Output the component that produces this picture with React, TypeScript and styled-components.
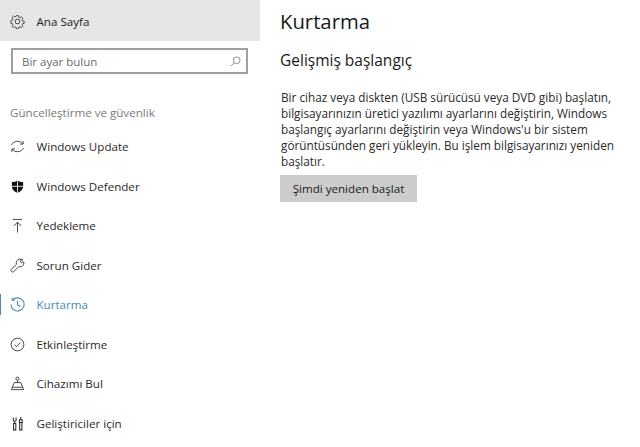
import styled, { createGlobalStyle } from 'styled-components';
import { ReactNode } from 'react';

const GlobalStyle = createGlobalStyle`
  html, body {
    margin: 0;
    padding: 0;
    background: #fff;
  }
  body {
    font-family: 'Open Sans', 'Noto Sans', sans-serif;
  }
`;

const icon = { fill: 'none', stroke: 'currentColor', strokeWidth: 0.9 };

const items: { label: string; active?: boolean; glyph: ReactNode }[] = [
  {
    label: 'Windows Update',
    glyph: (
      <svg width="15" height="15" viewBox="0 0 16 16" {...icon}>
        <path d="M1.500 6.500C2.500 4 5 2.500 8 2.500c2.300 0 4.300 .9 5.500 2.500" />
        <path d="M14 2.200v3.200h-3.200" />
        <path d="M14.500 9.500C13.500 12 11 13.500 8 13.500c-2.300 0-4.300-.9-5.500-2.500" />
        <path d="M2 13.800v-3.200h3.200" />
      </svg>
    ),
  },
  {
    label: 'Windows Defender',
    glyph: (
      <svg width="15" height="15" viewBox="0 0 16 16">
        <path fill="#111" d="M8 1.500c1.800 1.300 3.600 1.800 6 1.800v4.700c0 3.200-2.300 5.300-6 6.600-3.700-1.300-6-3.400-6-6.600V3.300c2.400 0 4.200-.5 6-1.800z" />
        <path stroke="#fff" strokeWidth="0.9" fill="none" d="M8 1.500v13M2 7.800h12" />
      </svg>
    ),
  },
  {
    label: 'Yedekleme',
    glyph: (
      <svg width="15" height="15" viewBox="0 0 16 16" {...icon}>
        <path d="M3 1.500h10" />
        <path d="M8 15.500V4.500" />
        <path d="M4 8.500l4-4 4 4" />
      </svg>
    ),
  },
  {
    label: 'Sorun Gider',
    glyph: (
      <svg width="15" height="15" viewBox="0 0 16 16" {...icon}>
        <path d="M10.500 1.200a4 4 0 0 0-3.600 5.400L1.200 12.300a1.500 1.500 0 0 0 0 1.700l.8.800a1.500 1.500 0 0 0 1.700 0l5.700-5.700a4 4 0 0 0 5.400-3.700c0-.5 0-.8-.2-1.200L12 4.800l-1-.9V2.900l2.500-1c-.8-.5-1.900-.7-3-.7z" />
      </svg>
    ),
  },
  {
    label: 'Kurtarma',
    active: true,
    glyph: (
      <svg width="15" height="15" viewBox="0 0 16 16" {...icon} strokeWidth={1.200}>
        <path d="M2.700 3.300A7 7 0 1 1 1 8" />
        <path d="M2.500 .8v2.700h2.700" />
        <path d="M8 4v4.500l3 1.500" />
      </svg>
    ),
  },
  {
    label: 'Etkinleştirme',
    glyph: (
      <svg width="15" height="15" viewBox="0 0 16 16" {...icon}>
        <circle cx="8" cy="8" r="6.800" />
        <path d="M4.800 8.200l2.200 2.200 4.200-4.600" />
      </svg>
    ),
  },
  {
    label: 'Cihazımı Bul',
    glyph: (
      <svg width="15" height="15" viewBox="0 0 16 16" {...icon}>
        <circle cx="8" cy="2.800" r="1.700" />
        <path d="M8 4.500V7" />
        <path d="M4.500 7h7l3 7.500h-13z" />
        <path d="M2.500 12h11" />
      </svg>
    ),
  },
  {
    label: 'Geliştiriciler için',
    glyph: (
      <svg width="15" height="15" viewBox="0 0 16 16" {...icon} strokeWidth={1.100}>
        <path d="M3.500 1.500v2.700a1.500 1.500 0 0 0 3 0V1.500" />
        <path d="M5 5.700V8" />
        <path d="M3.800 8h2.400v6.800H3.800z" />
        <path d="M11.500 1v3" />
        <path d="M10 4h3v3h-3z" />
        <path d="M10.300 7h2.400v7.800h-2.400z" />
      </svg>
    ),
  },
];

export default function App() {
  return (
    <Page>
      <GlobalStyle />
      <Sidebar>
        <HomeRow>
          <IconSlot>
            <svg width="15" height="15" viewBox="0 0 16 16" {...icon}>
              <circle cx="8" cy="8" r="2.500" />
              <path d="M6.800 1h2.400l.4 2 1.300.6 1.800-1.100 1.700 1.700-1.100 1.800.6 1.300 2 .4v2.400l-2 .4-.6 1.300 1.100 1.800-1.700 1.700-1.800-1.100-1.300.6-.4 2H6.800l-.4-2-1.300-.6-1.800 1.100-1.700-1.700 1.100-1.800-.6-1.300-2-.4V6.700l2-.4.6-1.300-1.100-1.800 1.700-1.700 1.800 1.100 1.300-.6z" transform="translate(.8 .8) scale(.9)" />
            </svg>
          </IconSlot>
          <span>Ana Sayfa</span>
        </HomeRow>
        <SearchBox>
          <SearchText>Bir ayar bulun</SearchText>
          <svg width="11" height="11" viewBox="0 0 14 14" fill="none" stroke="#8a8a8a" strokeWidth="1.200">
            <circle cx="8.500" cy="5.500" r="4.300" />
            <path d="M5.500 8.500L1 13" />
          </svg>
        </SearchBox>
        <SectionTitle>Güncelleştirme ve güvenlik</SectionTitle>
        <Nav>
          {items.map((item) => (
            <NavRow key={item.label} $active={item.active}>
              <IconSlot>{item.glyph}</IconSlot>
              <span>{item.label}</span>
            </NavRow>
          ))}
        </Nav>
      </Sidebar>
      <Main>
        <Title>Kurtarma</Title>
        <Heading>Gelişmiş başlangıç</Heading>
        <Body>
          Bir cihaz veya diskten (USB sürücüsü veya DVD gibi) başlatın, bilgisayarınızın üretici yazılımı ayarlarını
          değiştirin, Windows başlangıç ayarlarını değiştirin veya Windows'u bir sistem görüntüsünden geri yükleyin.
          Bu işlem bilgisayarınızı yeniden başlatır.
        </Body>
        <RestartButton>Şimdi yeniden başlat</RestartButton>
      </Main>
    </Page>
  );
}

const Page = styled.div`
  display: flex;
  width: 640px;
  height: 447px;
  overflow: hidden;
  background: #fff;
  color: #1a1a1a;
`;

const Sidebar = styled.aside`
  width: 260px;
  flex-shrink: 0;
  display: flex;
  flex-direction: column;
  & > * {
    flex-shrink: 0;
  }
`;

const IconSlot = styled.div`
  width: 15px;
  height: 15px;
  display: flex;
  margin-right: 11.500px;
  flex-shrink: 0;
`;

const HomeRow = styled.div`
  height: 39px;
  padding: 2px 0 0 10px;
  display: flex;
  align-items: center;
  background: #e6e6e6;
  font-size: 11.600px;
  color: #222;
`;

const SearchBox = styled.div`
  width: 237px;
  height: 26px;
  margin: 7px 0 0 11px;
  padding: 0 5px 0 9px;
  box-sizing: border-box;
  display: flex;
  align-items: center;
  justify-content: space-between;
  border: 2px solid #a0a0a0;
  background: #fff;
`;

const SearchText = styled.span`
  font-size: 11.500px;
  color: #6a6a6a;
`;

const SectionTitle = styled.div`
  margin: 30px 0 0 10px;
  height: 18px;
  line-height: 18px;
  font-size: 11.600px;
  color: #7a7a7a;
`;

const Nav = styled.nav`
  display: flex;
  flex-direction: column;
  margin-top: 5px;
`;

const NavRow = styled.div<{ $active?: boolean }>`
  position: relative;
  height: 39.500px;
  flex-shrink: 0;
  display: flex;
  align-items: center;
  padding-left: 10px;
  font-size: 11.600px;
  color: ${(p) => (p.$active ? '#4a8cb0' : '#2a2a2a')};

  &::before {
    content: '';
    display: ${(p) => (p.$active ? 'block' : 'none')};
    position: absolute;
    left: 0;
    top: 9px;
    width: 1px;
    height: 21px;
    background: #4a8cb0;
  }
`;

const Main = styled.main`
  flex: 1;
  display: flex;
  flex-direction: column;
  align-items: flex-start;
  padding: 6px 0 0 20px;
`;

const Title = styled.h1`
  margin: 0;
  font-size: 20.300px;
  line-height: 30px;
  font-weight: 400;
  color: #1a1a1a;
`;

const Heading = styled.h2`
  margin: 13px 0 0;
  font-size: 15.500px;
  line-height: 22px;
  font-weight: 400;
  color: #1a1a1a;
`;

const Body = styled.p`
  margin: 18px 0 0 1px;
  width: 340px;
  font-size: 11.750px;
  line-height: 16px;
  color: #2a2a2a;
`;

const RestartButton = styled.button`
  width: 137px;
  height: 27px;
  margin: 6px 0 0 0;
  padding: 0;
  border: none;
  background: #cccccc;
  font-family: inherit;
  font-size: 11.600px;
  color: #1a1a1a;
`;
